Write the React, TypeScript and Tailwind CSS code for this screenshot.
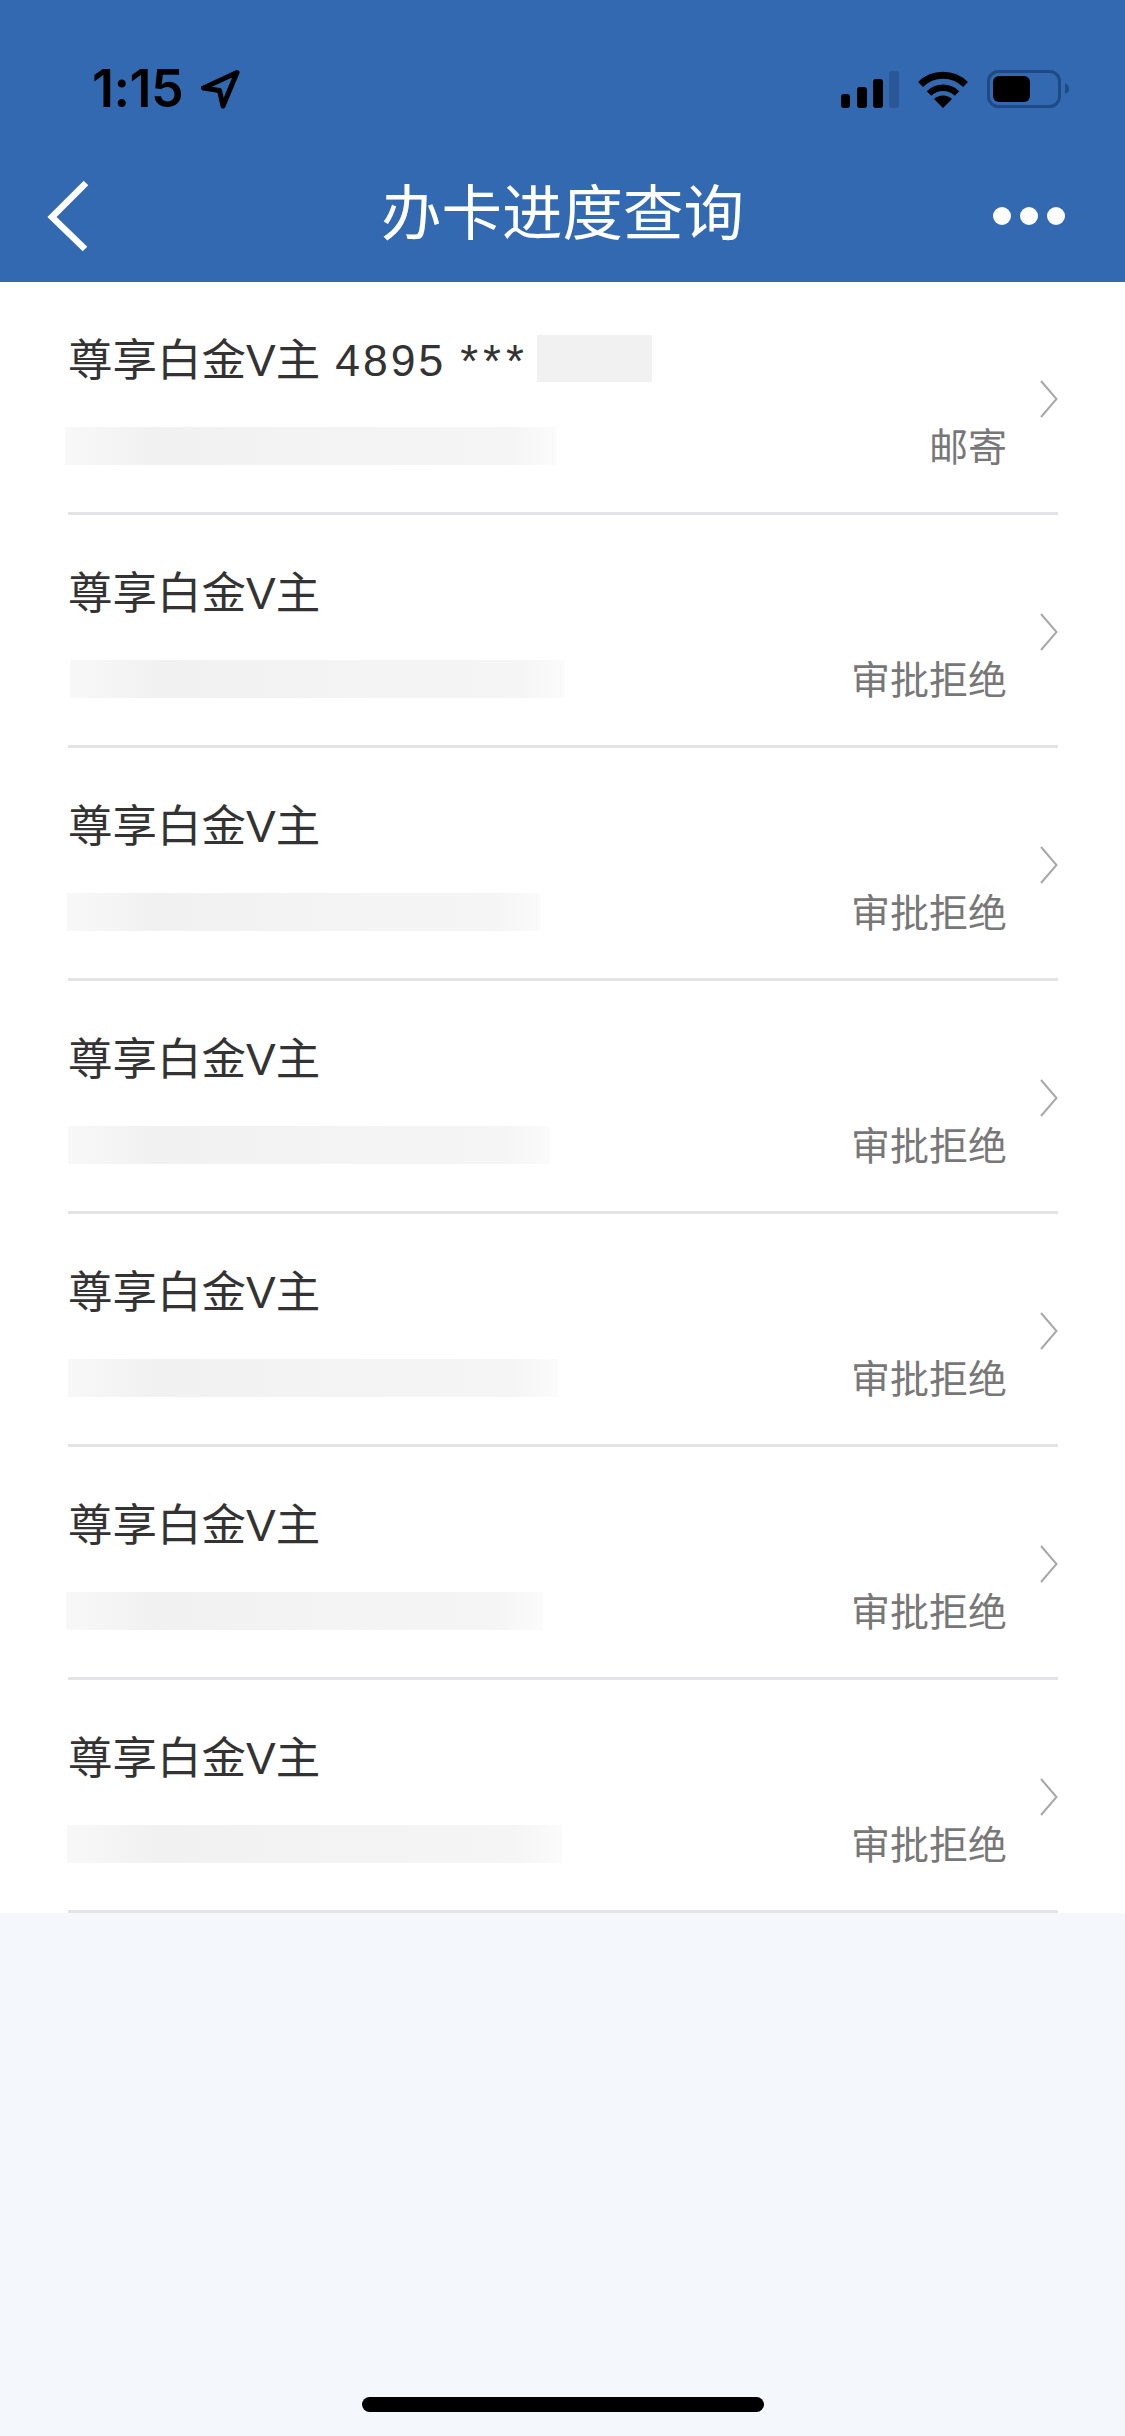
const rows = [
  { status: "邮寄", blur: "-ml-[3px] w-[492px]", extra: true },
  { status: "审批拒绝", blur: "ml-[2px] w-[495px]", extra: false },
  { status: "审批拒绝", blur: "-ml-[1px] w-[474px]", extra: false },
  { status: "审批拒绝", blur: "ml-0 w-[482px]", extra: false },
  { status: "审批拒绝", blur: "ml-0 w-[490px]", extra: false },
  { status: "审批拒绝", blur: "-ml-[2px] w-[477px]", extra: false },
  { status: "审批拒绝", blur: "-ml-[1px] w-[495px]", extra: false },
];

function Signal() {
  return (
    <svg width="58" height="37" viewBox="0 0 58 37" className="block">
      <rect x="0" y="23" width="9" height="14" rx="3" fill="#000" />
      <rect x="16" y="16" width="10" height="21" rx="3" fill="#000" />
      <rect x="32" y="8" width="10" height="29" rx="3" fill="#000" />
      <rect x="48" y="0" width="10" height="37" rx="3" fill="#2a5796" />
    </svg>
  );
}

function Wifi() {
  return (
    <svg width="50" height="37" viewBox="0 0 50 37" className="block">
      <path d="M2.5 13.5 A32 32 0 0 1 47.5 13.5" fill="none" stroke="#000" strokeWidth="7" />
      <path d="M11 22.5 A20 20 0 0 1 39 22.5" fill="none" stroke="#000" strokeWidth="6.5" />
      <path d="M25 37 L16 28 A13 13 0 0 1 34 28 Z" fill="#000" />
    </svg>
  );
}

function Battery() {
  return (
    <svg width="82" height="38" viewBox="0 0 82 38" className="block">
      <rect x="1.5" y="1.5" width="71" height="35" rx="10" fill="none" stroke="#1f4a85" strokeWidth="3" />
      <rect x="6" y="6" width="37" height="26" rx="6" fill="#000" />
      <path d="M78 13 C81 15 82 17 82 19 C82 21 81 23 78 24 Z" fill="#1f4a85" />
    </svg>
  );
}

function Location() {
  return (
    <svg width="40" height="40" viewBox="0 0 40 40" className="block">
      <path d="M37 3.5 L3.5 19 L19.5 21.5 L23 37 Z" fill="none" stroke="#000" strokeWidth="5" strokeLinejoin="round" />
    </svg>
  );
}

function Chevron() {
  return (
    <svg width="18" height="38" viewBox="0 0 18 38" className="mt-[4px] block shrink-0">
      <path d="M1 1 L16.5 19 L1 37" fill="none" stroke="#a8a8a8" strokeWidth="2" />
    </svg>
  );
}

const blurFill =
  "bg-[linear-gradient(90deg,#f8f8f8_0%,#f1f1f1_18%,#f3f3f3_50%,#f5f5f5_90%,#fbfbfb_100%)]";

export default function App() {
  return (
    <div className="flex min-h-[2436px] w-[1125px] flex-col bg-[#f4f7fb] font-['Liberation_Sans','Noto_Sans_CJK_SC',sans-serif]">
      <header className="bg-[#3269b0]">
        <div className="flex h-[150px] items-center justify-between pt-[28px] pl-[92px] pr-[56px]">
          <div className="flex items-center gap-[17px]">
            <span className="font-['Inter',sans-serif] text-[52px] font-semibold leading-none tracking-[-0.5px] text-black">1:15</span>
            <Location />
          </div>
          <div className="flex items-center gap-[19px]">
            <Signal />
            <Wifi />
            <Battery />
          </div>
        </div>
        <div className="flex h-[132px] items-center justify-between">
          <div className="w-[132px] pl-[46px]">
            <svg width="44" height="72" viewBox="0 0 44 72" className="block">
              <path d="M40 3 L6 37 L39 69" fill="none" stroke="#fff" strokeWidth="6.5" />
            </svg>
          </div>
          <h1 className="-mt-[3px] flex-1 text-center text-[60.5px] font-normal leading-none text-white">办卡进度查询</h1>
          <div className="flex w-[132px] items-center justify-end gap-[9px] pr-[60px]">
            <span className="size-[18px] rounded-full bg-white" />
            <span className="size-[18px] rounded-full bg-white" />
            <span className="size-[18px] rounded-full bg-white" />
          </div>
        </div>
      </header>

      <main className="bg-white pl-[68px] pr-[67px]">
        {rows.map((row, i) => (
          <div key={i} className="flex h-[233px] items-center border-b-[3px] border-[#e4e4e6]">
            <div className="flex-1 self-start pt-[49px]">
              <div className="flex h-[60px] items-center text-[44.5px] leading-[60px] text-[#333]">
                <span>尊享白金V主</span>
                {row.extra && (
                  <>
                    <span className="ml-[15px] tracking-[3px]">4895</span>
                    <span className="ml-[14px] text-[46px] tracking-[5px]">***</span>
                    <span className="ml-[8px] -mt-[6px] h-[47px] w-[115px] bg-[#f1f1f2]" />
                  </>
                )}
              </div>
              <div className="mt-[27px] flex h-[60px] items-center justify-between pr-[33px]">
                <div className={`-mt-[5px] h-[38px] ${row.blur} ${blurFill}`} />
                <span className="text-[39px] leading-[60px] text-[#777]">{row.status}</span>
              </div>
            </div>
            <Chevron />
          </div>
        ))}
      </main>

      <div className="mt-auto flex justify-center pb-[24px]">
        <div className="h-[15px] w-[402px] rounded-full bg-black" />
      </div>
    </div>
  );
}
